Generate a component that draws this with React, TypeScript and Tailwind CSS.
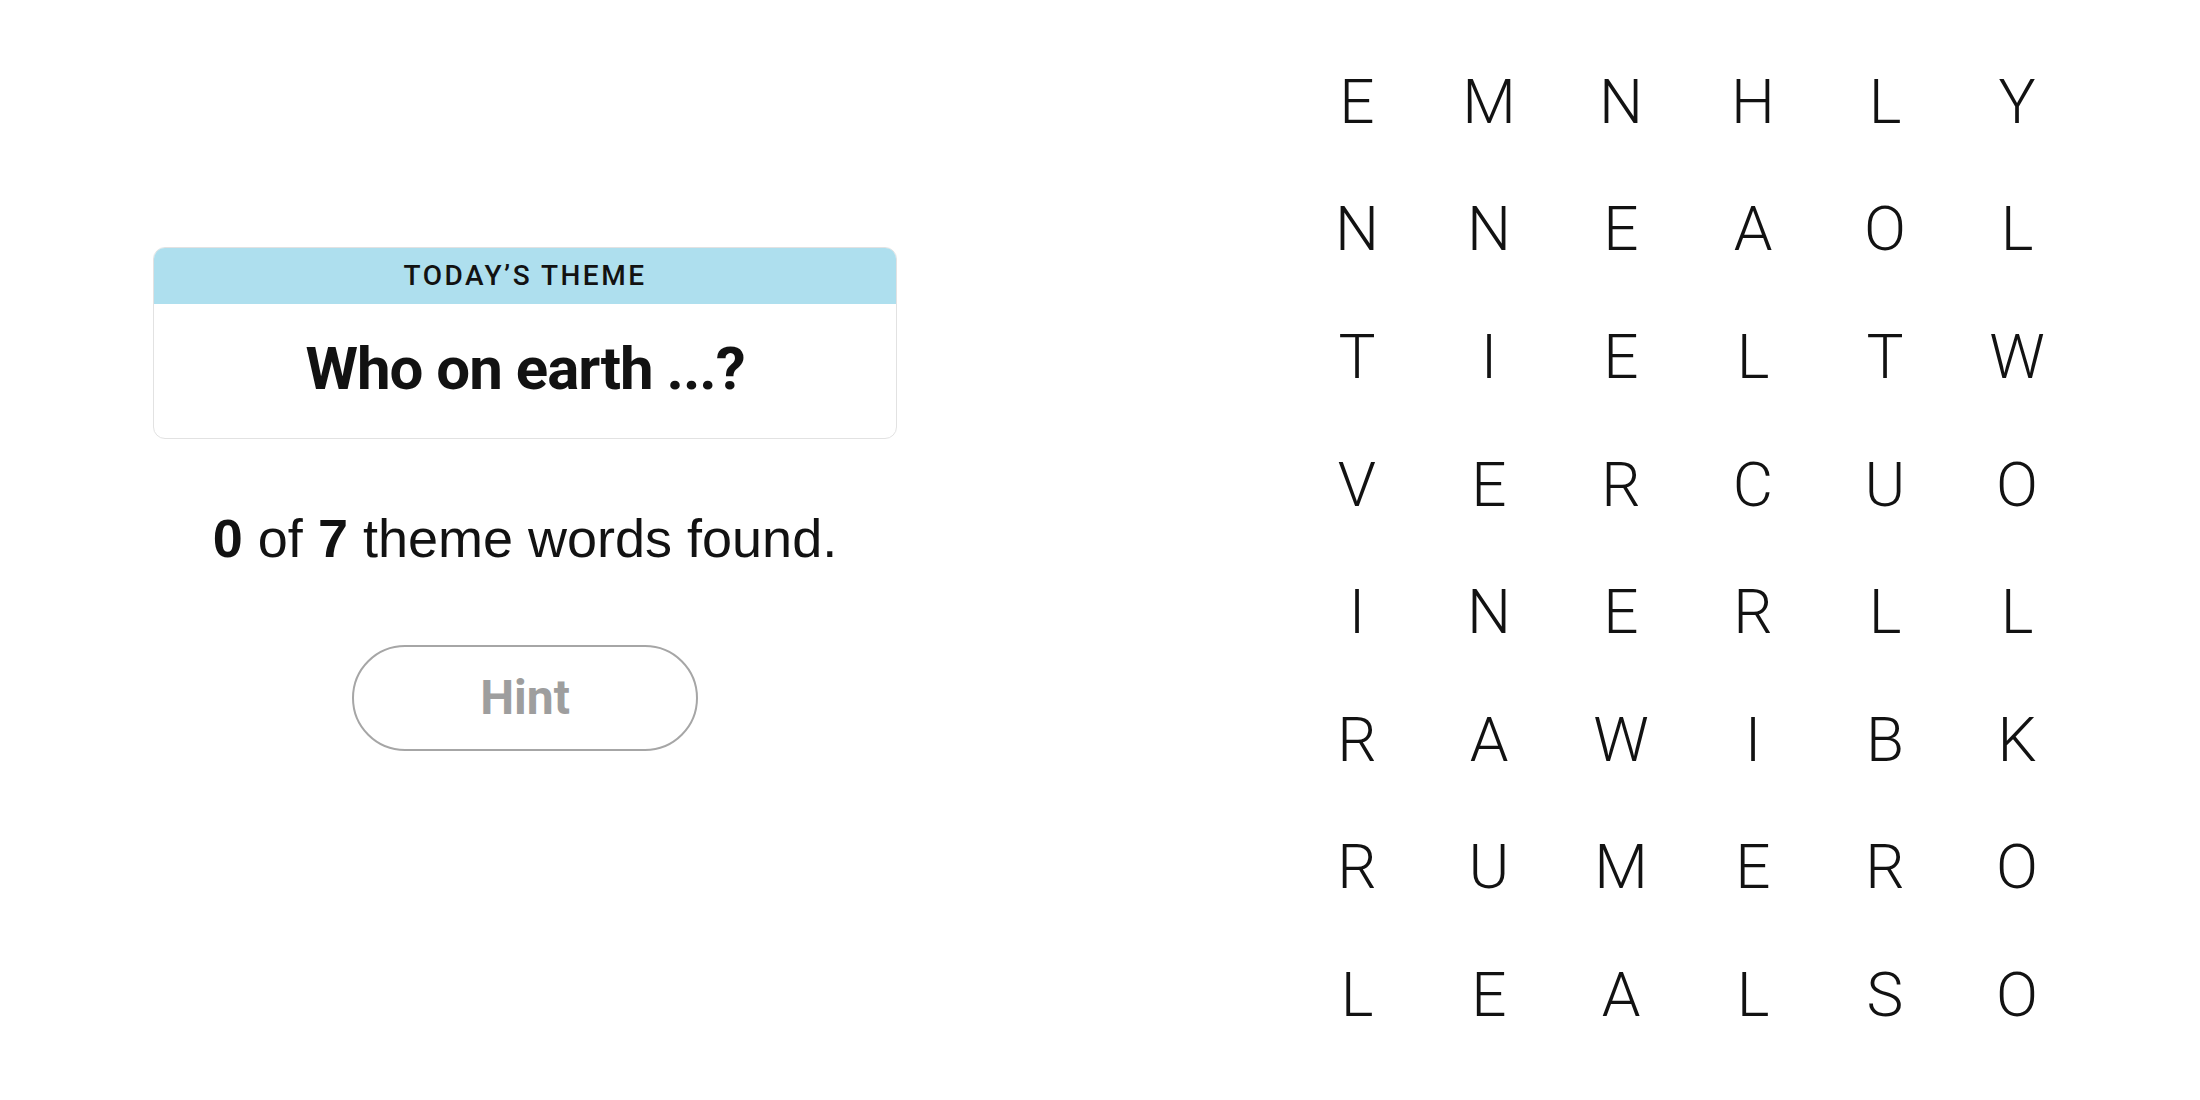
import React from "react";

const rows = [
  "EMNHLY",
  "NNEAOL",
  "TIELTW",
  "VERCUO",
  "INERLL",
  "RAWIBK",
  "RUMERO",
  "LEALSO",
];

export default function App() {
  return (
    <div className="w-[2200px] h-[1100px] bg-white flex text-[#121212]">
      <div className="w-[1050px] flex flex-col items-center pt-[247px]">
        <div className="w-[744px] h-[192px] rounded-[12px] border border-[#e2e2e2] overflow-hidden flex flex-col">
          <div className="h-[56px] bg-[#aedfee] flex items-center justify-center">
            <span className="font-['Roboto',sans-serif] text-[28px] font-medium tracking-[2.5px] uppercase leading-none">
              Today’s Theme
            </span>
          </div>
          <div className="flex-1 flex items-center justify-center pb-[4px]">
            <span className="font-['Roboto',sans-serif] font-bold text-[60px] tracking-[-1px] leading-none">
              Who on earth ...?
            </span>
          </div>
        </div>
        <div className="mt-[72px] font-['Liberation_Sans',sans-serif] text-[54px] leading-none">
          <b>0</b> of <b>7</b> theme words found.
        </div>
        <button className="mt-[80px] w-[346px] h-[106px] rounded-full border-2 border-[#a6a6a6] bg-white flex items-center justify-center">
          <span className="font-['Roboto',sans-serif] font-bold text-[48px] text-[#9e9e9e] leading-none">
            Hint
          </span>
        </button>
      </div>
      <div className="pl-[241px] pt-[38px]">
        <div className="grid grid-cols-[repeat(6,132px)] auto-rows-[127.6px]">
          {rows.flatMap((r, ri) =>
            r.split("").map((ch, ci) => (
              <div
                key={`${ri}-${ci}`}
                className="flex items-center justify-center font-['Roboto',sans-serif] font-light text-[62px] leading-none"
              >
                {ch}
              </div>
            ))
          )}
        </div>
      </div>
    </div>
  );
}
